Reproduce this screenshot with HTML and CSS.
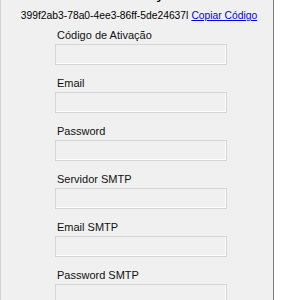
FILE: index.html
```html
<!DOCTYPE html>
<html>
<head>
  <link rel="stylesheet" href="styles.css">
</head>
<body>
  <div class="panel">
    <h1 class="title">Ativação</h1>

    <div class="code-row">
      <span class="code">399f2ab3-78a0-4ee3-86ff-5de24637l</span>
      <a href="#" class="copy-link">Copiar Código</a>
    </div>

    <div class="form">
      <div class="field">
        <label>Código de Ativação</label>
        <div class="input"></div>
      </div>
      <div class="field">
        <label>Email</label>
        <div class="input"></div>
      </div>
      <div class="field">
        <label>Password</label>
        <div class="input"></div>
      </div>
      <div class="field">
        <label>Servidor SMTP</label>
        <div class="input"></div>
      </div>
      <div class="field">
        <label>Email SMTP</label>
        <div class="input"></div>
      </div>
      <div class="field">
        <label>Password SMTP</label>
        <div class="input"></div>
      </div>
    </div>
  </div>
</body>
</html>
```

FILE: styles.css
```css
html, body {
  margin: 0;
  background-color: #ffffff;
}

body {
  font-family: "Liberation Sans", Arial, sans-serif;
  font-size: 11px;
  color: #000;
}

.panel {
  width: 272px;
  height: 300px;
  overflow: hidden;
  background-color: #f0f0f0;
  border-left: 1px solid #d0d0d0;
  border-right: 1px solid #7a7a7a;
}

.title {
  margin: -19px 0 5px 0;
  padding-left: 20px;
  height: 22px;
  font-size: 18px;
  line-height: 22px;
  font-weight: bold;
  text-align: center;
}

.code-row {
  display: flex;
  justify-content: center;
  gap: 3px;
  padding-left: 4px;
  font-size: 10.3px;
  line-height: 16px;
  white-space: nowrap;
}

.copy-link {
  color: #0000ee;
  text-decoration: underline;
}

.form {
  display: flex;
  flex-direction: column;
  gap: 10px;
  padding: 3px 0 0 54px;
}

.field {
  display: flex;
  flex-direction: column;
  gap: 1px;
}

.field label {
  padding-left: 2px;
  line-height: 16px;
  color: #111;
}

.input {
  width: 170px;
  height: 19px;
  background-color: #f0f0f0;
  border: 1px solid #d6d6d6;
  box-shadow: inset -1px -1px 0 #ffffff;
}
```
